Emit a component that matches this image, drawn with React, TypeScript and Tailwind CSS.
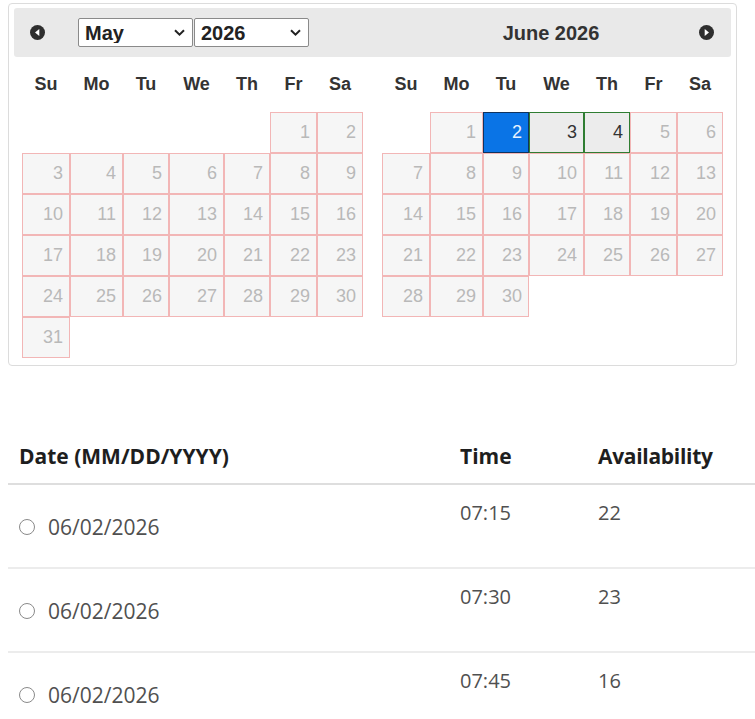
import React from "react";

type Day = number | null;

const may: Day[][] = [
  [null, null, null, null, null, 1, 2],
  [3, 4, 5, 6, 7, 8, 9],
  [10, 11, 12, 13, 14, 15, 16],
  [17, 18, 19, 20, 21, 22, 23],
  [24, 25, 26, 27, 28, 29, 30],
  [31, null, null, null, null, null, null],
];

const june: Day[][] = [
  [null, 1, 2, 3, 4, 5, 6],
  [7, 8, 9, 10, 11, 12, 13],
  [14, 15, 16, 17, 18, 19, 20],
  [21, 22, 23, 24, 25, 26, 27],
  [28, 29, 30, null, null, null, null],
];

const dayNames = ["Su", "Mo", "Tu", "We", "Th", "Fr", "Sa"];

const slots = [
  { date: "06/02/2026", time: "07:15", avail: "22" },
  { date: "06/02/2026", time: "07:30", avail: "23" },
  { date: "06/02/2026", time: "07:45", avail: "16" },
];

const cols = "grid grid-cols-[48px_53px_46px_55px_46px_47px_46px]";

const Chevron = () => (
  <svg width="11" height="7" viewBox="0 0 11 7" className="pointer-events-none absolute right-[8px] top-[11px]">
    <path d="M1 1.2 L5.5 5.6 L10 1.2" fill="none" stroke="#222" strokeWidth="2" />
  </svg>
);

const NavIcon = ({ dir }: { dir: "prev" | "next" }) => (
  <svg width="15" height="15" viewBox="0 0 15 15">
    <circle cx="7.5" cy="7.5" r="7.5" fill="#2e2e2e" />
    {dir === "prev" ? (
      <path d="M9.3 4 L5 7.5 L9.3 11 Z" fill="#fff" />
    ) : (
      <path d="M5.7 4 L10 7.5 L5.7 11 Z" fill="#fff" />
    )}
  </svg>
);

function Cell({ day, month }: { day: Day; month: "may" | "june" }) {
  if (day === null) return <div className="h-[41px]" />;
  const selected = month === "june" && day === 2;
  const range = month === "june" && (day === 3 || day === 4);
  let cls = "border-[#f2b6b6] bg-[#f6f6f6] text-[#b9b9b9]";
  if (selected) cls = "border-[#10335e] bg-[#0a74e6] text-[#e8f2ff]";
  if (range) cls = "border-[#2f7d32] bg-[#ececec] text-[#333]";
  return (
    <div className={`h-[41px] border flex items-center justify-end pr-[6px] text-[18px] ${cls}`}>
      {day}
    </div>
  );
}

function Month({ weeks, month }: { weeks: Day[][]; month: "may" | "june" }) {
  return (
    <div className="w-[341px]">
      <div className={`${cols} h-[55px] items-center`}>
        {dayNames.map((d) => (
          <div key={d} className="text-center text-[18px] font-bold text-[#333]">
            {d}
          </div>
        ))}
      </div>
      <div className={cols}>
        {weeks.flat().map((d, i) => (
          <Cell key={i} day={d} month={month} />
        ))}
      </div>
    </div>
  );
}

export default function App() {
  return (
    <div className="min-h-[719px] bg-white pt-[3px]">
      {/* Datepicker */}
      <div
        className="ml-[8px] w-[729px] rounded-[4px] border border-[#dcdcdc] px-[5px] pt-[4px] pb-[7px]"
        style={{ fontFamily: '"Liberation Sans", Arial, sans-serif' }}
      >
        <div className="flex h-[49px] items-center gap-[19px] rounded-[3px] bg-[#e9e9e9] pl-[8px] pr-[10px]">
          <div className="flex w-[341px] items-center">
            <div className="ml-[8px] flex">
              <NavIcon dir="prev" />
            </div>
            <div className="ml-[33px] flex">
              <div className="relative">
                <select
                  defaultValue="May"
                  className="h-[29px] w-[115px] appearance-none rounded-[2px] border border-[#8a8a8a] bg-white pl-[6px] text-[20px] font-bold leading-none text-[#222]"
                >
                  <option>May</option>
                </select>
                <Chevron />
              </div>
              <div className="relative ml-[1px]">
                <select
                  defaultValue="2026"
                  className="h-[29px] w-[115px] appearance-none rounded-[2px] border border-[#8a8a8a] bg-white pl-[6px] text-[20px] font-bold leading-none text-[#222]"
                >
                  <option>2026</option>
                </select>
                <Chevron />
              </div>
            </div>
          </div>
          <div className="grid w-[341px] grid-cols-[1fr_auto_1fr] items-center">
            <div />
            <div className="text-[20px] font-bold text-[#333]">June 2026</div>
            <div className="mr-[7px] flex justify-end">
              <NavIcon dir="next" />
            </div>
          </div>
        </div>
        <div className="flex gap-[19px] pl-[8px]">
          <Month weeks={may} month="may" />
          <Month weeks={june} month="june" />
        </div>
      </div>

      {/* Time slots */}
      <div className="ml-[8px] mt-[76px]" style={{ fontFamily: '"Open Sans", "Noto Sans", sans-serif' }}>
        <div className="grid grid-cols-[452px_138px_1fr] border-b-2 border-[#dedede] pb-[13px] text-[21px] font-bold leading-[28px] text-[#1e1e1e]">
          <div className="pl-[11px]">Date (MM/DD/YYYY)</div>
          <div>Time</div>
          <div className="tracking-[-0.3px]">Availability</div>
        </div>
        {slots.map((s) => (
          <div
            key={s.time}
            className="grid h-[84px] grid-cols-[452px_138px_1fr] border-b-2 border-[#ececec] text-[20px] leading-[28px] text-[#505050]"
          >
            <label className="flex items-start gap-[13px] pl-[11px] pt-[28px]">
              <span className="mt-[6px] block h-[16px] w-[16px] shrink-0 rounded-full border border-[#8a8a8a] bg-white" />
              <span className="text-[21px]">{s.date}</span>
            </label>
            <div className="pt-[14px]">{s.time}</div>
            <div className="pt-[14px]">{s.avail}</div>
          </div>
        ))}
      </div>
    </div>
  );
}
